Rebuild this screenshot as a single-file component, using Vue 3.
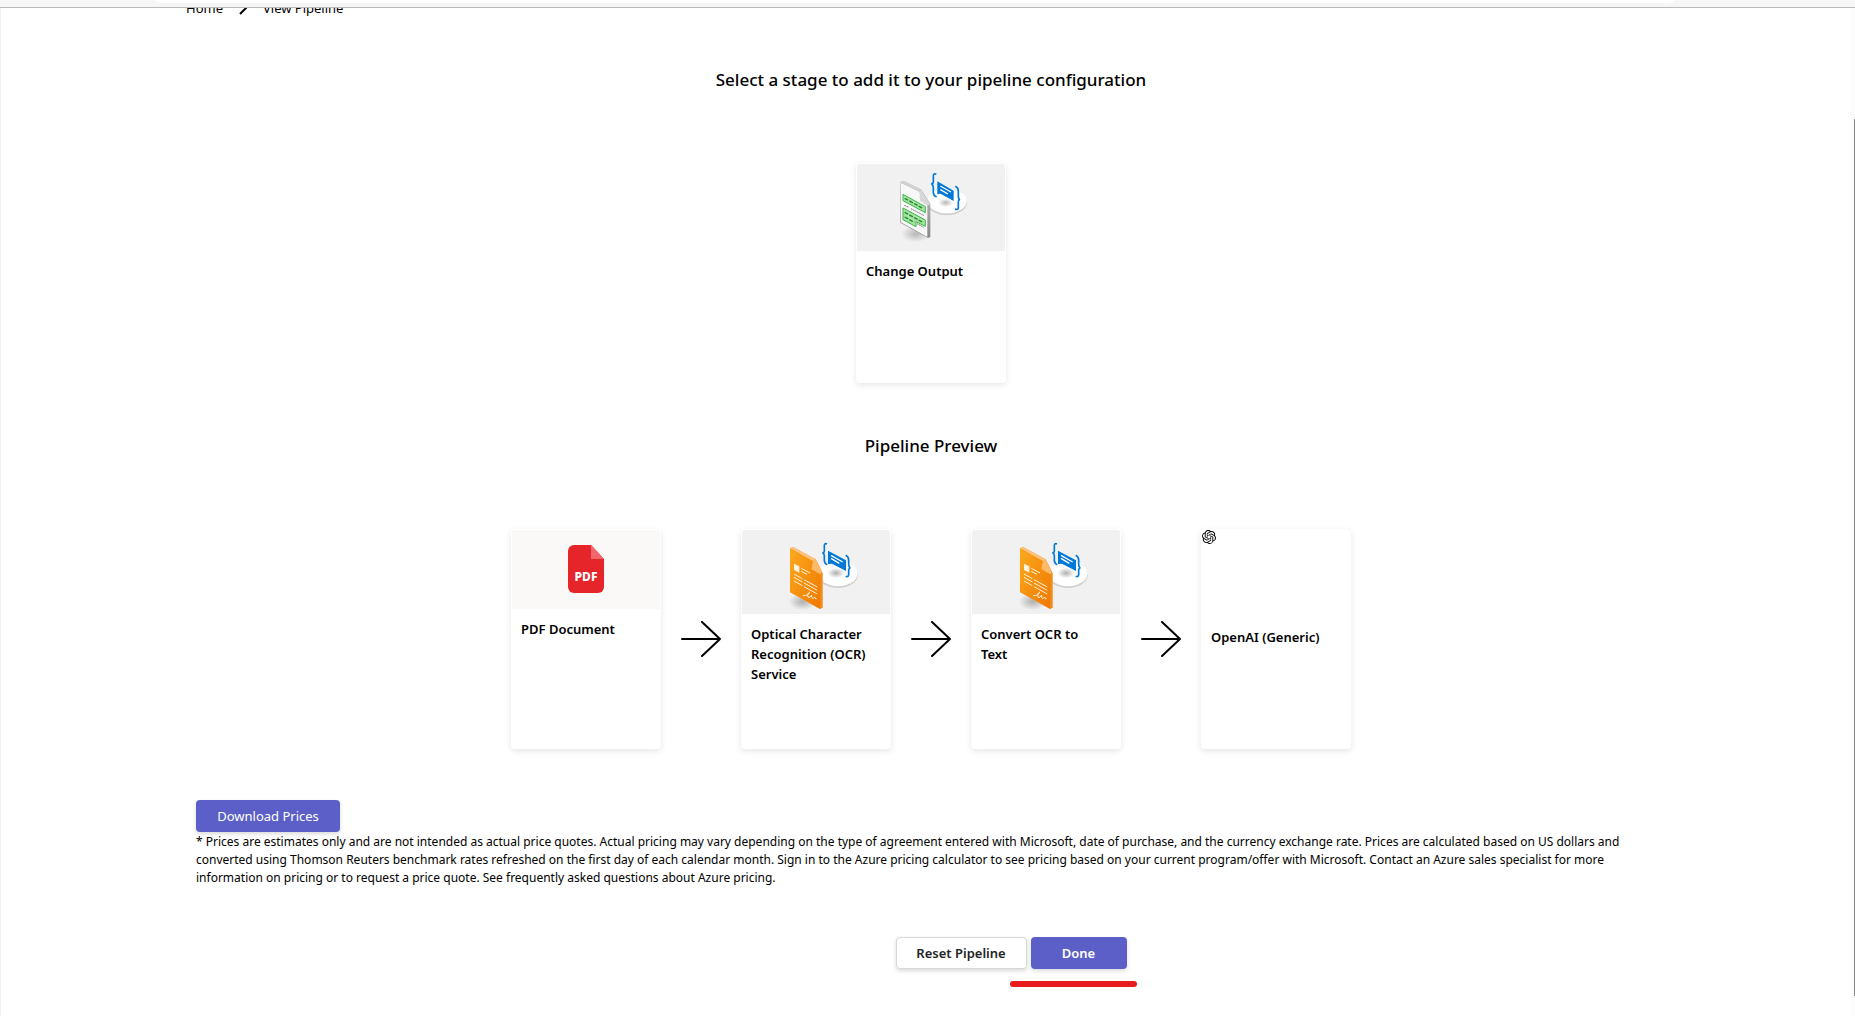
<script setup>
import { ref } from 'vue'

const available = ref([{ name: 'Change Output', art: 'output' }])

const pipeline = ref([
  { name: 'PDF Document', art: 'pdf' },
  { name: 'Optical Character Recognition (OCR) Service', art: 'ocr' },
  { name: 'Convert OCR to Text', art: 'ocr' },
  { name: 'OpenAI (Generic)', art: 'openai' },
])
</script>

<template>
  <div class="window">
    <div class="toolbar"><div class="address"></div></div>
    <div class="viewport">
      <main class="page">
        <nav class="crumbs" aria-label="Breadcrumb">
          <a href="#">Home</a>
          <svg width="8" height="14" viewBox="0 0 8 14" fill="none" stroke="#000" stroke-width="2"><path d="M1 1l6 6-6 6" /></svg>
          <a href="#">View Pipeline</a>
        </nav>

        <h2>Select a stage to add it to your pipeline configuration</h2>

        <div class="stages">
          <article v-for="stage in available" :key="stage.name" class="card">
            <div class="art output">
              <svg viewBox="0 0 444 261">
                <defs>
                  <radialGradient id="shade-a"><stop offset="0" stop-color="#b8b8b8" /><stop offset="1" stop-color="#b8b8b8" stop-opacity="0" /></radialGradient>
                  <linearGradient id="edge-a" x1="0" y1="0" x2="0" y2="1"><stop offset="0" stop-color="#c4c4c4" /><stop offset="1" stop-color="#868686" /></linearGradient>
                </defs>
                <ellipse cx="176" cy="210" rx="44" ry="24" fill="url(#shade-a)" />
                <ellipse cx="270" cy="116" rx="60" ry="38" fill="#cfcfcf" />
                <ellipse cx="270" cy="111" rx="59" ry="37" fill="#fff" />
                <ellipse cx="266" cy="116" rx="22" ry="13" fill="url(#shade-a)" />
                <path d="M130 54l9-4 53 26 28 43v100l-7 3-83-46z" fill="url(#edge-a)" />
                <path d="M130 54l9-4 53 26-6 5z" fill="#d2d2d2" />
                <path d="M132 57l55 26 24 42v94l-79-44z" fill="#f8f8f8" />
                <path d="M187 82l4-5 28 43-7 5-23-14z" fill="#d8d8d8" />
                <path d="M138 91l67 37v18l-67-36zM138 132l67 36v19l-28-14v15l-39-21z" fill="#a4e59f" stroke="#42b649" stroke-width="3" />
                <path d="M143 103l56 31M143 145l56 31M143 159l29 16" stroke="#247f35" stroke-width="4" stroke-dasharray="12 4" />
                <path d="M142 124l14 6m6 4l39 21M180 179l20 11" stroke="#777" stroke-width="3" stroke-dasharray="5 2" />
                <path d="M238 31q-10-5-9 7v14q0 9-6 6 6 5 6 13v15q1 10 10 13M295 67q9 4 9 15v14q0 10 5 12-5-2-5 6v17q0 8-10 4" fill="none" stroke="#0078d7" stroke-width="5" />
                <path d="M241 52l49 28v31l-39-22-10 2z" fill="#0078d7" />
                <path d="M250 66l32 18M250 77l23 13" stroke="#fff" stroke-width="4" />
              </svg>
            </div>
            <h3>{{ stage.name }}</h3>
          </article>
        </div>

        <h2>Pipeline Preview</h2>

        <div class="stages">
          <template v-for="(stage, i) in pipeline" :key="stage.name">
            <svg v-if="i > 0" class="arrow" viewBox="0 0 40 36" fill="none" stroke="#000" stroke-width="2" stroke-linecap="round" stroke-linejoin="round"><path d="M1 18h38M21 1l18 17-18 17" /></svg>
            <article class="card">
              <div class="art" :class="stage.art">
                <svg v-if="stage.art === 'pdf'" viewBox="0 0 148 79">
                  <path d="M62 15h17l13 14v28a6 6 0 0 1-6 6H62a6 6 0 0 1-6-6V21a6 6 0 0 1 6-6z" fill="#e5252a" />
                  <path d="M79 15l13 14H79z" fill="#f0686c" />
                  <text x="74" y="51" text-anchor="middle" class="pdf-label">PDF</text>
                </svg>
                <svg v-else-if="stage.art === 'ocr'" viewBox="0 0 444 252">
                  <defs>
                    <radialGradient :id="'shade-' + i"><stop offset="0" stop-color="#b0b0b0" /><stop offset="1" stop-color="#b0b0b0" stop-opacity="0" /></radialGradient>
                    <linearGradient :id="'sheet-' + i" x1="0" y1="0" x2="1" y2="1"><stop offset="0" stop-color="#fbaa1e" /><stop offset="1" stop-color="#f07800" /></linearGradient>
                  </defs>
                  <ellipse cx="182" cy="215" rx="42" ry="26" :fill="`url(#shade-${i})`" />
                  <ellipse cx="288" cy="136" rx="59" ry="38" fill="#d0d0d0" />
                  <ellipse cx="288" cy="131" rx="58" ry="38" fill="#fff" />
                  <ellipse cx="282" cy="129" rx="26" ry="16" :fill="`url(#shade-${i})`" />
                  <path d="M144 55l9-4 68 37 21 42v103l-8 4-90-51z" fill="#f28a17" />
                  <path d="M144 55l9-4 68 37-8 6z" fill="#ffc37d" />
                  <path d="M144 56l69 38 21 39v103l-90-50z" :fill="`url(#sheet-${i})`" />
                  <path d="M213 93l8-5 19 40-6 5-26-16z" fill="#ffb968" />
                  <path d="M156 101l16 8v19l-16-8z" fill="#fff3df" />
                  <path d="M178 115l26 14M178 124l17 9M156 132l25 14M156 142l25 14M156 153l25 14M186 149l40 22M186 159l40 22M186 170l40 22" stroke="#fff3df" stroke-width="3" />
                  <path d="M183 197q18 0 20-11-9 5-4 17 7-1 10-8-2 9 4 11l5-5q2 8 6 5" fill="none" stroke="#fff3df" stroke-width="3" />
                  <path d="M255 42q-9-4-8 8v12q0 7-6 6 6 2 6 10v14q1 9 9 12M311 76q9 4 9 14v13q0 9 5 12-5-1-5 6v12q0 9-9 6" fill="none" stroke="#0078d7" stroke-width="5" />
                  <path d="M258 62l54 29v32l-42-22-12 1z" fill="#0078d7" />
                  <path d="M267 76l35 20M267 85l25 15" stroke="#fff" stroke-width="4" />
                </svg>
                <svg v-else viewBox="0 0 24 24">
                  <path d="M22.2819 9.8211a5.9847 5.9847 0 0 0-.5157-4.9108 6.0462 6.0462 0 0 0-6.5098-2.9A6.0651 6.0651 0 0 0 4.9807 4.1818a5.9847 5.9847 0 0 0-3.9977 2.9 6.0462 6.0462 0 0 0 .7427 7.0966 5.98 5.98 0 0 0 .511 4.9107 6.051 6.051 0 0 0 6.5146 2.9001A5.9847 5.9847 0 0 0 13.2599 24a6.0557 6.0557 0 0 0 5.7718-4.2058 5.9894 5.9894 0 0 0 3.9977-2.9001 6.0557 6.0557 0 0 0-.7475-7.0729zm-9.022 12.6081a4.4755 4.4755 0 0 1-2.8764-1.0408l.1419-.0804 4.7783-2.7582a.7948.7948 0 0 0 .3927-.6813v-6.7369l2.02 1.1686a.071.071 0 0 1 .038.052v5.5826a4.504 4.504 0 0 1-4.4945 4.4944zm-9.6607-4.1254a4.4708 4.4708 0 0 1-.5346-3.0137l.142.0852 4.783 2.7582a.7712.7712 0 0 0 .7806 0l5.8428-3.3685v2.3324a.0804.0804 0 0 1-.0332.0615L9.74 19.9502a4.4992 4.4992 0 0 1-6.1408-1.6464zM2.3408 7.8956a4.485 4.485 0 0 1 2.3655-1.9728V11.6a.7664.7664 0 0 0 .3879.6765l5.8144 3.3543-2.0201 1.1685a.0757.0757 0 0 1-.071 0l-4.8303-2.7865A4.504 4.504 0 0 1 2.3408 7.872zm16.5963 3.8558L13.1038 8.364 15.1192 7.2a.0757.0757 0 0 1 .071 0l4.8303 2.7913a4.4944 4.4944 0 0 1-.6765 8.1042v-5.6772a.79.79 0 0 0-.407-.667zm2.0107-3.0231l-.142-.0852-4.7735-2.7818a.7759.7759 0 0 0-.7854 0L9.409 9.2297V6.8974a.0662.0662 0 0 1 .0284-.0615l4.8303-2.7866a4.4992 4.4992 0 0 1 6.6802 4.66zM8.3065 12.863l-2.02-1.1638a.0804.0804 0 0 1-.038-.0567V6.0742a4.4992 4.4992 0 0 1 7.3757-3.4537l-.142.0805L8.704 5.459a.7948.7948 0 0 0-.3927.6813zm1.0976-2.3654l2.602-1.4998 2.6069 1.4998v2.9994l-2.5974 1.4997-2.6067-1.4997Z" />
                </svg>
              </div>
              <h3>{{ stage.name }}</h3>
            </article>
          </template>
        </div>

        <section class="pricing">
          <button type="button" class="primary download">Download Prices</button>
          <p>* Prices are estimates only and are not intended as actual price quotes. Actual pricing may vary depending on the type of agreement entered with Microsoft, date of purchase, and the currency exchange rate. Prices are calculated based on US dollars and<br>converted using Thomson Reuters benchmark rates refreshed on the first day of each calendar month. Sign in to the Azure pricing calculator to see pricing based on your current program/offer with Microsoft. Contact an Azure sales specialist for more<br>information on pricing or to request a price quote. See frequently asked questions about Azure pricing.</p>
        </section>

        <div class="actions">
          <button type="button" class="reset">Reset Pipeline</button>
          <div class="marked">
            <button type="button" class="primary done">Done</button>
            <span class="marker"></span>
          </div>
        </div>
      </main>
      <div class="scrollbar"><div class="thumb"></div></div>
    </div>
  </div>
</template>

<style>
body {
  background: #fff;
}
</style>

<style scoped>
* {
  box-sizing: border-box;
}
.window {
  display: flex;
  flex-direction: column;
  min-height: 100vh;
  color: #000;
  font-family: "Noto Sans", "Open Sans", sans-serif;
  font-size: 13px;
}
.toolbar {
  display: flex;
  align-items: flex-end;
  height: 8px;
  padding: 0 174px 4px 148px;
  overflow: hidden;
  background: #f6f6f6;
  border-bottom: 1px solid #bababa;
}
.address {
  flex: 1;
  height: 28px;
  background: #fff;
  border-radius: 14px;
}
.viewport {
  display: flex;
  flex: 1;
}
.page {
  flex: 1;
  min-width: 0;
  overflow: hidden;
  padding: 0 174px 0 185px;
  border-left: 1px solid #f2f2f2;
}
.crumbs {
  display: flex;
  align-items: center;
  gap: 16px;
  height: 19px;
  margin-top: -10px;
}
.crumbs a {
  color: #000;
  text-decoration: none;
}
h2 {
  margin: 0;
  padding: 48px 0 68px;
  font-size: 17px;
  line-height: 30px;
  font-weight: 500;
  text-align: center;
}
.stages {
  display: flex;
  justify-content: center;
  align-items: center;
  gap: 20px;
}
.card {
  width: 150px;
  height: 220px;
  border: 1px solid #fff;
  border-radius: 4px;
  overflow: hidden;
  box-shadow: 0 2px 6px rgba(0, 0, 0, 0.1);
}
.card h3 {
  margin: 0;
  padding: 10px 20px 10px 9px;
  font-size: 13px;
  line-height: 20px;
  font-weight: 600;
}
.art svg {
  display: block;
  width: 100%;
  height: 100%;
}
.art.output {
  height: 87px;
  background: #f1f1f1;
}
.art.pdf {
  height: 79px;
  background: #faf9f8;
}
.art.ocr {
  height: 84px;
  background: #f1f1f1;
}
.art.openai {
  height: 87px;
}
.art.openai svg {
  width: 14px;
  height: 14px;
}
.pdf-label {
  font-size: 12px;
  font-weight: 800;
  fill: #fff;
}
.arrow {
  width: 40px;
  height: 36px;
}
.pricing {
  padding: 51px 10px 0;
}
button {
  height: 32px;
  padding: 0;
  border-radius: 4px;
  font-family: inherit;
  font-size: 13px;
  box-shadow: 0 2px 4px rgba(0, 0, 0, 0.15);
}
.primary {
  border: 0;
  background: #5b5fc7;
  color: #fff;
}
.download {
  width: 144px;
}
.pricing p {
  margin: 1px 0 0;
  font-size: 12px;
  line-height: 18px;
  white-space: nowrap;
}
.actions {
  display: flex;
  justify-content: center;
  gap: 4px;
  padding: 50px 0 46px 160px;
}
.reset {
  width: 131px;
  border: 1px solid #d8d8d8;
  background: #fff;
  color: #242424;
  font-weight: 600;
}
.marked {
  position: relative;
}
.done {
  width: 96px;
  font-weight: 600;
}
.marker {
  position: absolute;
  top: 44px;
  left: -21px;
  width: 127px;
  height: 6px;
  border-radius: 3px;
  background: #e81c1c;
}
.scrollbar {
  display: flex;
  justify-content: flex-end;
  width: 5px;
  padding: 111px 0 20px;
  background: #fcfcfc;
}
.thumb {
  width: 1px;
  background: #858585;
}
</style>
